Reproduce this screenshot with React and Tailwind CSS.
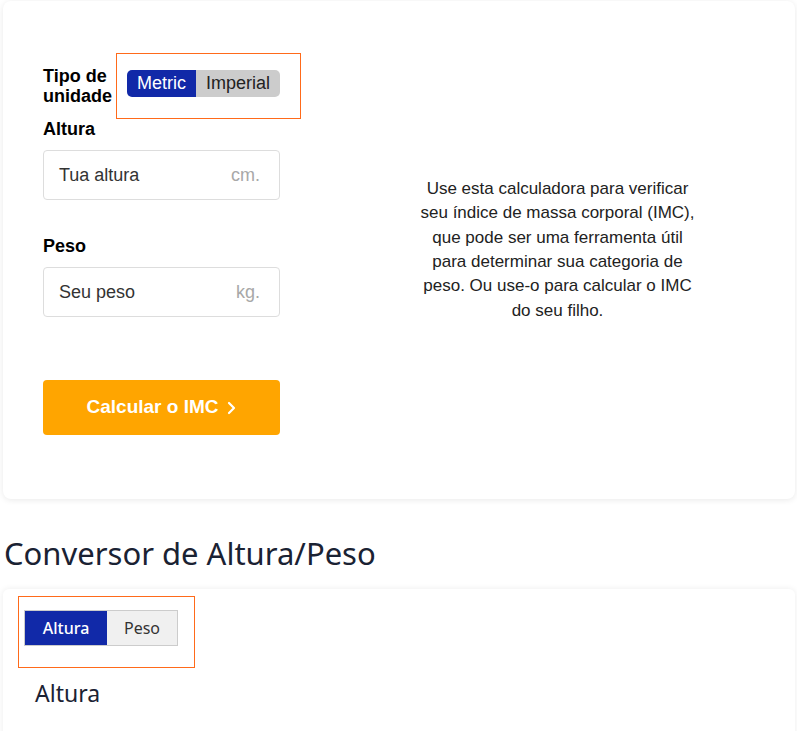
import React from "react";

const arial = { fontFamily: "'Liberation Sans', Arial, sans-serif" };

function Field({ label, placeholder, unit, className = "" }) {
  return (
    <div className={className}>
      <label className="block text-[18px] font-bold leading-[21px] text-black">{label}</label>
      <div className="mt-[10px] flex h-[50px] items-center justify-between rounded-[4px] border border-[#dddddd] bg-white pl-[15px] pr-[19px]">
        <span className="text-[18px] text-[#333333]">{placeholder}</span>
        <span className="text-[18px] text-[#a8a8a8]">{unit}</span>
      </div>
    </div>
  );
}

export default function App() {
  return (
    <div className="min-h-[731px] w-[797px] overflow-hidden bg-white" style={arial}>
      {/* BMI calculator card */}
      <section className="ml-[3px] mt-[1px] flex h-[498px] w-[792px] items-center rounded-[8px] bg-white shadow-[0_1px_6px_rgba(0,0,0,0.09)]">
        <div className="ml-[40px] flex w-[237px] flex-col self-start pt-[52px]">
          <div className="flex items-center">
            <span className="w-[74px] shrink-0 text-[18px] font-bold leading-[20px] text-black">
              Tipo de unidade
            </span>
            <div className="ml-[-1px] shrink-0 border border-[#ff6a1a] pb-[21px] pl-[10px] pr-[20px] pt-[16px]">
              <div className="flex h-[27px] overflow-hidden rounded-[5px] text-[18px] leading-[27px]">
                <span className="bg-[#1129a8] px-[10px] text-white">Metric</span>
                <span className="bg-[#cccccc] px-[10px] text-[#222222]">Imperial</span>
              </div>
            </div>
          </div>
          <Field label="Altura" placeholder="Tua altura" unit="cm." />
          <Field label="Peso" placeholder="Seu peso" unit="kg." className="mt-[36px]" />
          <button className="mt-[63px] flex h-[55px] w-full items-center justify-center gap-[9px] rounded-[4px] bg-[#ffa500] text-[19px] font-bold text-white">
            Calcular o IMC
            <svg width="9" height="14" viewBox="0 0 9 14" fill="none">
              <path d="M2 2l5 5-5 5" stroke="white" strokeWidth="2.2" strokeLinecap="round" strokeLinejoin="round" />
            </svg>
          </button>
        </div>
        <div className="flex flex-1 justify-center pl-[40px]">
          <p className="w-[278px] text-center text-[17px] leading-[24.4px] text-[#222222]">
            Use esta calculadora para verificar seu índice de massa corporal (IMC), que pode ser uma
            ferramenta útil para determinar sua categoria de peso. Ou use-o para calcular o IMC do seu
            filho.
          </p>
        </div>
      </section>

      {/* Height / weight converter */}
      <h2
        className="ml-[4px] mt-[33px] text-[31px] leading-[42px] text-[#1a2233]"
        style={{ fontFamily: "'Noto Sans', 'Open Sans', sans-serif" }}
      >
        Conversor de Altura/Peso
      </h2>
      <section className="ml-[3px] mt-[15px] w-[792px] rounded-t-[6px] bg-white pb-[30px] pl-[15px] pt-[7px] shadow-[0_0_6px_rgba(0,0,0,0.08)]">
        <div
          className="inline-block w-[177px] border border-[#ff6a1a] pb-[21px] pl-[5px] pt-[13px]"
          style={{ fontFamily: "'Noto Sans', Lato, sans-serif" }}
        >
          <div className="flex h-[36px] w-[154px] border border-[#cccccc] text-[16px]">
            <span className="flex w-[82px] items-center justify-center bg-[#1129a8] font-medium text-white">
              Altura
            </span>
            <span className="flex flex-1 items-center justify-center bg-[#f0f0f0] text-[#333333]">
              Peso
            </span>
          </div>
        </div>
        <h3
          className="ml-[17px] mt-[9px] text-[23px] leading-[32px] text-[#1a2233]"
          style={{ fontFamily: "'Noto Sans', 'Open Sans', sans-serif" }}
        >
          Altura
        </h3>
      </section>
    </div>
  );
}
